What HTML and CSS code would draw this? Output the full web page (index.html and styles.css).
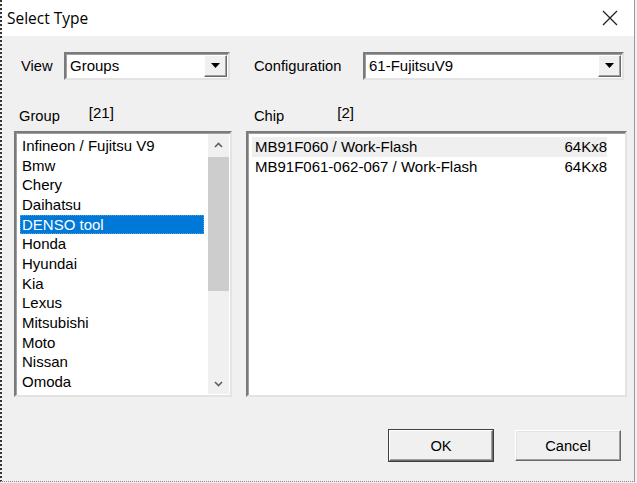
FILE: index.html
```html
<!DOCTYPE html>
<html>
<head>
<meta charset="utf-8">
<link rel="stylesheet" href="styles.css">
</head>
<body>
<div class="window">
  <div class="titlebar">
    <span class="title">Select Type</span>
    <svg class="close" width="16" height="16" viewBox="0 0 16 16"><path d="M1 1 L15 15 M15 1 L1 15" stroke="#222" stroke-width="1.3" fill="none"/></svg>
  </div>
  <div class="content">
    <div class="row1">
      <span class="lbl view-lbl">View</span>
      <div class="combo combo-view">
        <span class="combo-text">Groups</span>
        <span class="drop"><svg width="9" height="5" viewBox="0 0 9 5"><path d="M0 0 H9 L4.5 5 Z" fill="#000"/></svg></span>
      </div>
      <span class="lbl conf-lbl">Configuration</span>
      <div class="combo combo-conf">
        <span class="combo-text">61-FujitsuV9</span>
        <span class="drop"><svg width="9" height="5" viewBox="0 0 9 5"><path d="M0 0 H9 L4.5 5 Z" fill="#000"/></svg></span>
      </div>
    </div>
    <div class="row2">
      <div class="hdr hdr-group"><span class="lbl">Group</span><span class="count count-group">[21]</span></div>
      <div class="hdr hdr-chip"><span class="lbl">Chip</span><span class="count count-chip">[2]</span></div>
    </div>
    <div class="row3">
      <div class="listbox list-group">
        <div class="items">
          <div class="item">Infineon / Fujitsu V9</div>
          <div class="item">Bmw</div>
          <div class="item">Chery</div>
          <div class="item">Daihatsu</div>
          <div class="item selected">DENSO tool</div>
          <div class="item">Honda</div>
          <div class="item">Hyundai</div>
          <div class="item">Kia</div>
          <div class="item">Lexus</div>
          <div class="item">Mitsubishi</div>
          <div class="item">Moto</div>
          <div class="item">Nissan</div>
          <div class="item">Omoda</div>
          <div class="item">Ssangyong</div>
        </div>
        <div class="scrollbar">
          <div class="arrow"><svg width="9" height="6" viewBox="0 0 9 6"><path d="M1 5 L4.5 1.5 L8 5" stroke="#606060" stroke-width="1.6" fill="none"/></svg></div>
          <div class="track"><div class="thumb"></div></div>
          <div class="arrow"><svg width="9" height="6" viewBox="0 0 9 6"><path d="M1 1 L4.5 4.5 L8 1" stroke="#606060" stroke-width="1.6" fill="none"/></svg></div>
        </div>
      </div>
      <div class="listbox list-chip">
        <div class="chip-items">
          <div class="chip-row hover"><span>MB91F060 / Work-Flash</span><span class="size">64Kx8</span></div>
          <div class="chip-row"><span>MB91F061-062-067 / Work-Flash</span><span class="size">64Kx8</span></div>
        </div>
      </div>
    </div>
    <div class="row4">
      <button class="btn btn-ok">OK</button>
      <button class="btn btn-cancel">Cancel</button>
    </div>
  </div>
</div>
</body>
</html>
```
FILE: styles.css
```css
html, body {
  margin: 0;
  padding: 0;
  background: #f0f0f0;
}
body {
  width: 637px;
  height: 483px;
  overflow: hidden;
  font-family: "Liberation Sans", Arial, sans-serif;
  font-size: 15px;
  color: #000;
}
.window {
  box-sizing: border-box;
  width: 635px;
  height: 482px;
  border-left: 2px dotted #333;
  border-right: 1px solid #9a9a9a;
  border-bottom: 1px dotted #888;
  background: #f0f0f0;
}
.titlebar {
  height: 36px;
  background: #fff;
  display: flex;
  align-items: center;
  justify-content: space-between;
  padding: 0 16px 0 5px;
}
.title {
  font-family: "Open Sans", "Noto Sans", sans-serif;
  font-size: 15.5px;
  color: #000;
}
.close { display: block; }
.content {
  padding-top: 15px;
}
.row1 {
  display: flex;
  align-items: center;
  height: 29px;
}
.lbl { font-size: 14.7px; }
.view-lbl { margin-left: 19px; width: 43px; }
.combo {
  box-sizing: border-box;
  height: 28px;
  background: #fff;
  border: 2px solid;
  border-color: #7a7a7a #e3e3e3 #e3e3e3 #7a7a7a;
  box-shadow: inset 1px 1px 0 #a0a0a0;
  display: flex;
  align-items: center;
  justify-content: space-between;
  padding: 0 1px 0 4px;
}
.combo-view { width: 166px; }
.conf-lbl { margin-left: 24px; width: 109px; }
.combo-conf { width: 261px; }
.drop {
  box-sizing: border-box;
  width: 23px;
  height: 22px;
  background: #f0f0f0;
  border: 1px solid;
  border-color: #fff #696969 #696969 #fff;
  box-shadow: inset -1px -1px 0 #a0a0a0;
  display: flex;
  align-items: center;
  justify-content: center;
}
.drop svg { display: block; }
.row2 {
  display: flex;
  height: 51px;
  align-items: flex-end;
  box-sizing: border-box;
  padding-bottom: 7px;
}
.hdr { display: flex; align-items: center; }
.hdr-group { margin-left: 17px; width: 235px; }
.count { margin-top: -8px; }
.count-group { margin-left: 29px; }
.count-chip { margin-left: 53px; }
.row3 {
  display: flex;
  height: 266px;
}
.listbox {
  box-sizing: border-box;
  height: 266px;
  background: #fff;
  border: 2px solid;
  border-color: #7a7a7a #e3e3e3 #e3e3e3 #7a7a7a;
  box-shadow: inset 1px 1px 0 #a0a0a0;
  overflow: hidden;
}
.list-group {
  width: 218px;
  margin-left: 12px;
  display: flex;
  padding: 3px 1px 1px 4px;
}
.items {
  flex: 1;
  overflow: hidden;
}
.item {
  height: 19.67px;
  line-height: 19.67px;
  padding-left: 2px;
  white-space: nowrap;
}
.item.selected {
  background: #0078d7;
  color: #fff;
  outline: 1px dotted #5aa0e0;
  outline-offset: -1px;
  margin-right: 4px;
}
.scrollbar {
  width: 21px;
  display: flex;
  flex-direction: column;
  background: #f0f0f0;
  margin-top: -2px;
}
.arrow {
  height: 21px;
  display: flex;
  align-items: center;
  justify-content: center;
}
.arrow svg { display: block; }
.track { flex: 1; }
.thumb {
  margin: 2px 0 0 0;
  height: 134px;
  background: #cdcdcd;
}
.list-chip {
  width: 381px;
  margin-left: 14px;
  padding: 4px 18px 0 4px;
}
.chip-row {
  height: 19.67px;
  line-height: 19.67px;
  display: flex;
  justify-content: space-between;
  padding-left: 3px;
  white-space: nowrap;
}
.chip-row.hover { background: #efefef; }
.row4 {
  display: flex;
  padding-top: 33px;
}
.btn {
  box-sizing: border-box;
  height: 31px;
  font-family: "Liberation Sans", Arial, sans-serif;
  font-size: 14.7px;
  color: #000;
  background: #f0f0f0;
  border: 1px solid;
  border-color: #fff #696969 #696969 #fff;
  box-shadow: inset -1px -1px 0 #a0a0a0, inset 1px 1px 0 #e3e3e3;
  padding: 0;
}
.btn-ok { width: 104px; margin-left: 387px; box-shadow: 0 0 0 1px #404040, inset -1px -1px 0 #a0a0a0; }
.btn-cancel { width: 106px; margin-left: 22px; }
```
